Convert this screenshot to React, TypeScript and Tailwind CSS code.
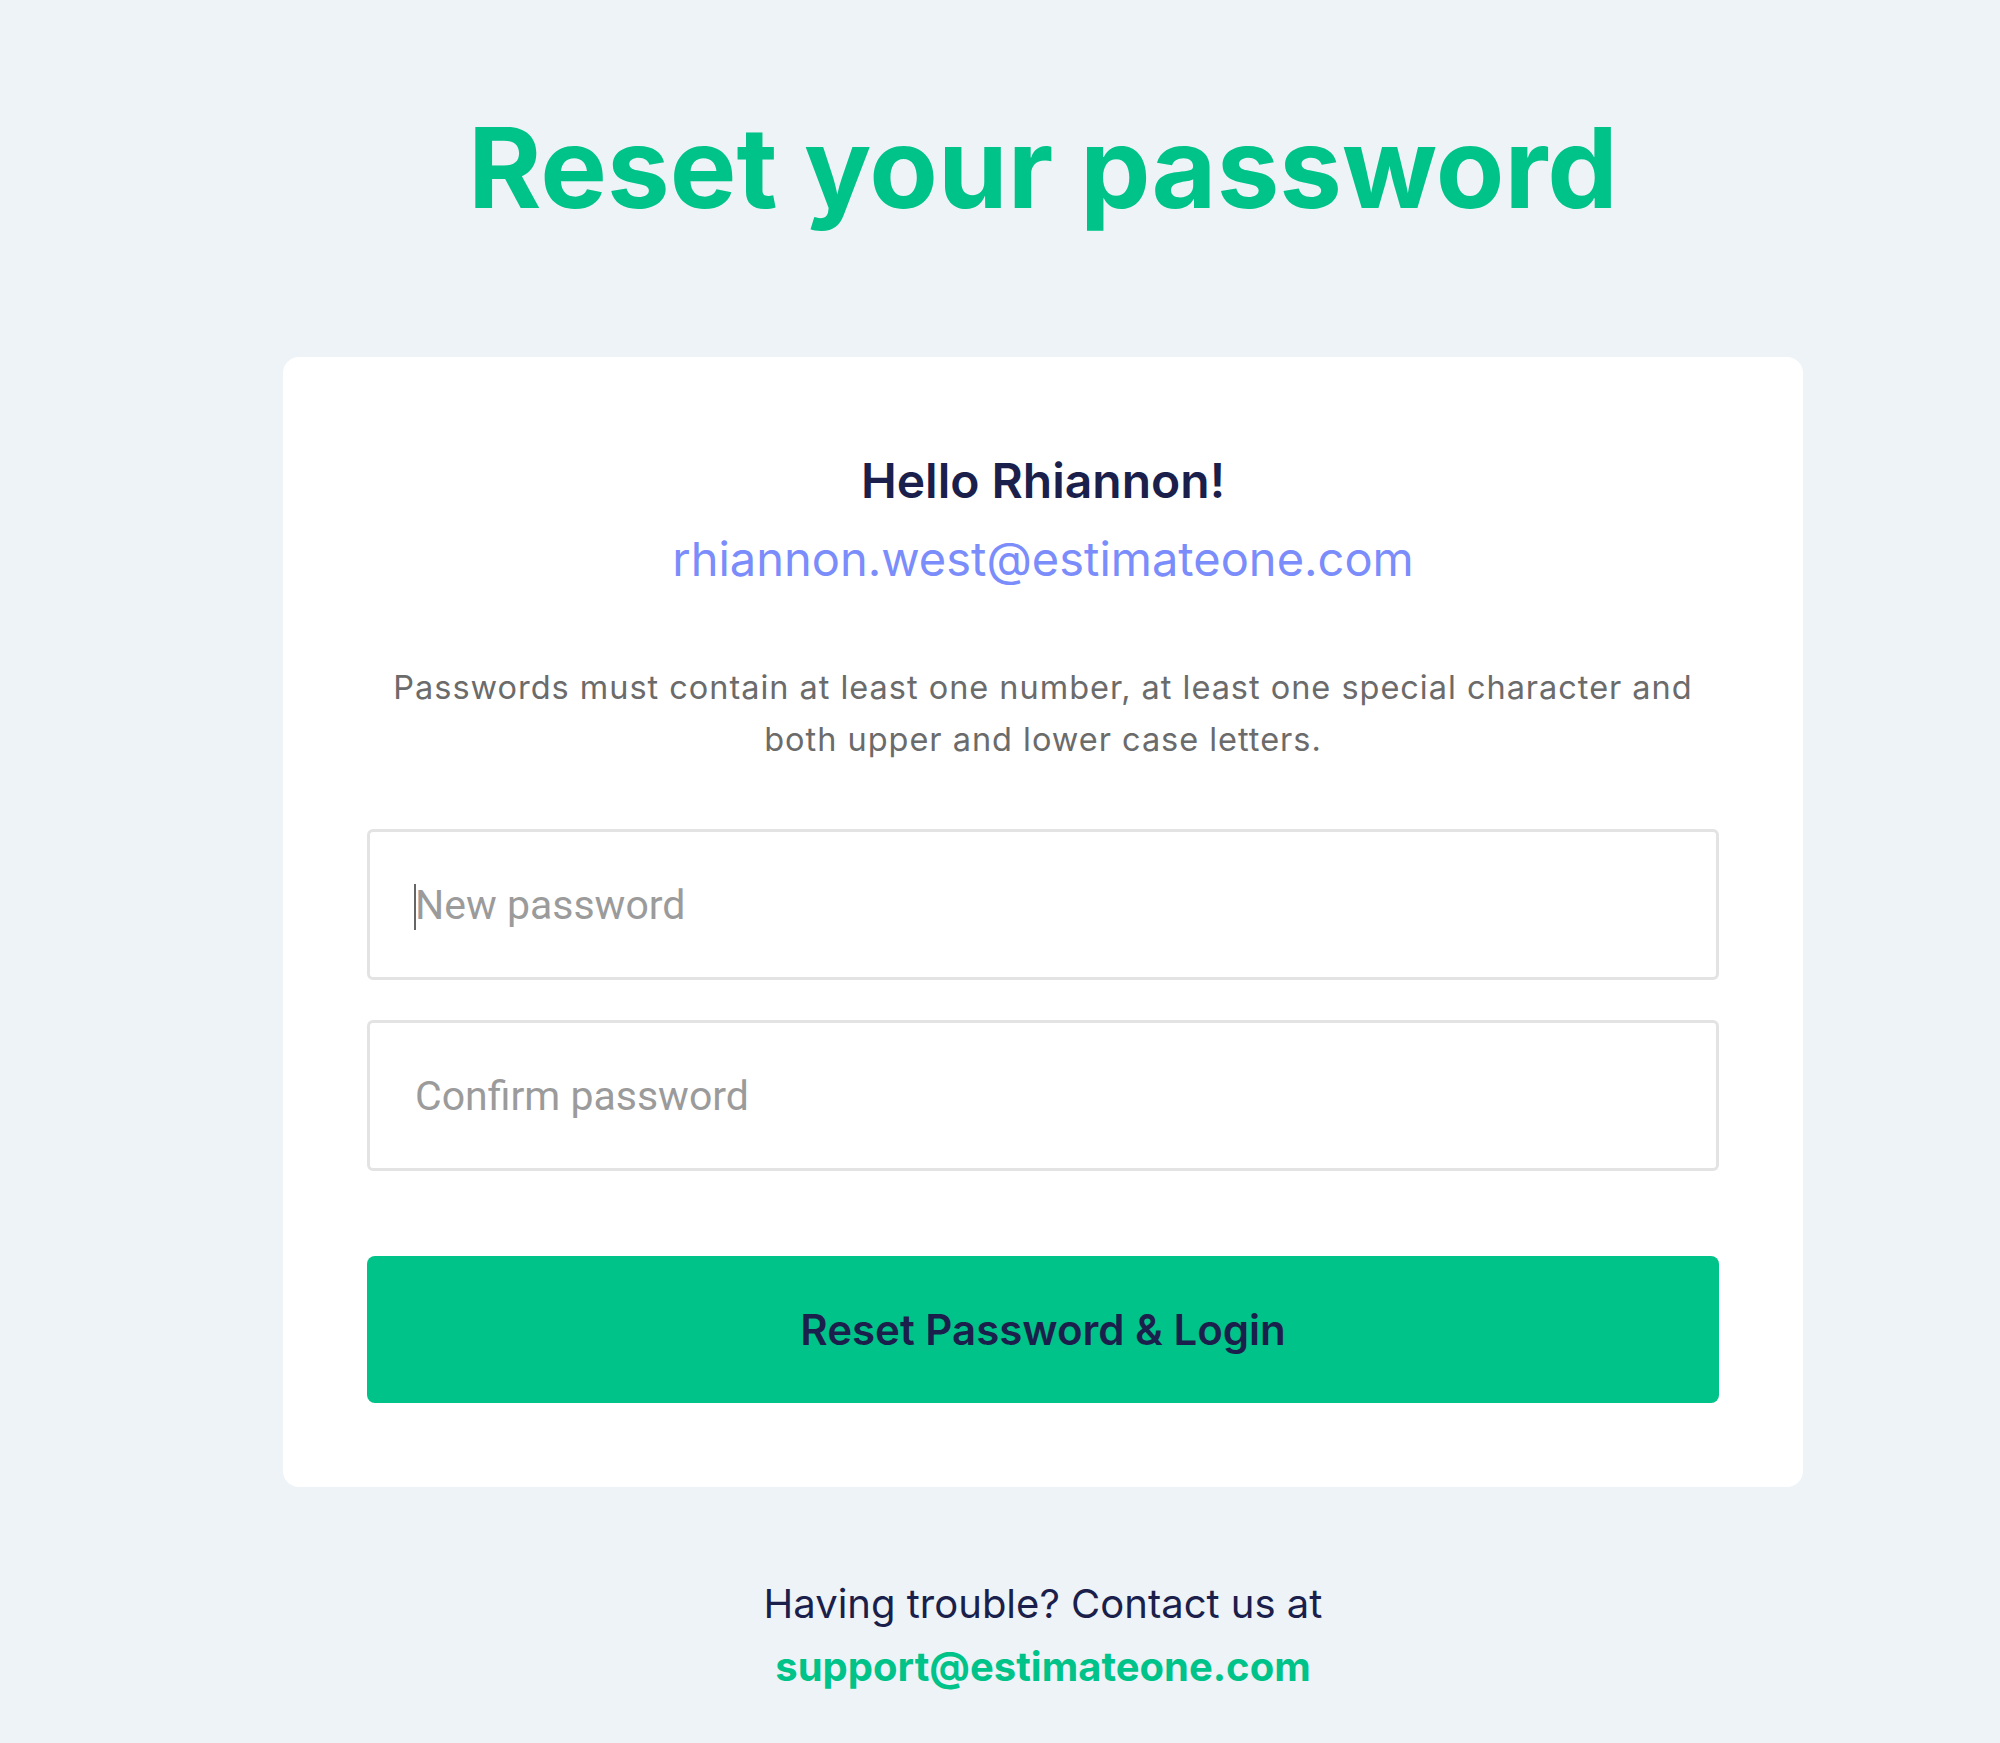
export default function App() {
  return (
    <div className="min-h-screen bg-[#eef3f7] font-['Inter',sans-serif]">
      <div className="ml-[283px] w-[1520px] flex flex-col items-center pt-[111px] pb-[60px]">
        <h1 className="text-[112px] leading-none font-bold text-[#00c389]">
          Reset your password
        </h1>

        {/* Card */}
        <div className="mt-[134px] w-full bg-white rounded-2xl px-[84px] pt-[100px] pb-[84px] flex flex-col items-center">
          <h2 className="text-[48px] leading-none font-semibold text-[#1b1f4b]">Hello Rhiannon!</h2>
          <p className="mt-[30px] text-[47px] leading-none text-[#7b8cfb]">rhiannon.west@estimateone.com</p>

          <p className="mt-[80px] text-center text-[32.5px] leading-[52px] tracking-[0.03em] text-[#6b6b6b]">
            Passwords must contain at least one number, at least one special character and
            <br />
            both upper and lower case letters.
          </p>

          <div className="mt-[63px] w-full flex flex-col gap-[40px]">
            <div className="relative">
              <input
                type="password"
                placeholder="New password"
                className="w-full h-[151px] rounded-md border-[3px] border-[#e3e3e3] bg-white px-[45px] text-[41px] font-['Roboto',sans-serif] text-[#333] placeholder:text-[#9b9b9b] outline-none"
              />
              <span className="absolute left-[47px] top-[55px] w-[2px] h-[46px] bg-[#666]" />
            </div>
            <input
              type="password"
              placeholder="Confirm password"
              className="w-full h-[151px] rounded-md border-[3px] border-[#e3e3e3] bg-white px-[45px] text-[41px] font-['Roboto',sans-serif] text-[#333] placeholder:text-[#9b9b9b] outline-none"
            />
          </div>

          <button className="mt-[85px] w-full h-[147px] rounded-lg bg-[#00c389] text-[42px] font-semibold text-[#1b1f4b]">
            Reset Password &amp; Login
          </button>
        </div>

        {/* Footer */}
        <div className="mt-[85px] flex flex-col items-center text-[40px] leading-[63px]">
          <span className="text-[#1b1f4b]">Having trouble? Contact us at</span>
          <a href="#" className="font-bold text-[#00c389]">support@estimateone.com</a>
        </div>
      </div>
    </div>
  );
}
